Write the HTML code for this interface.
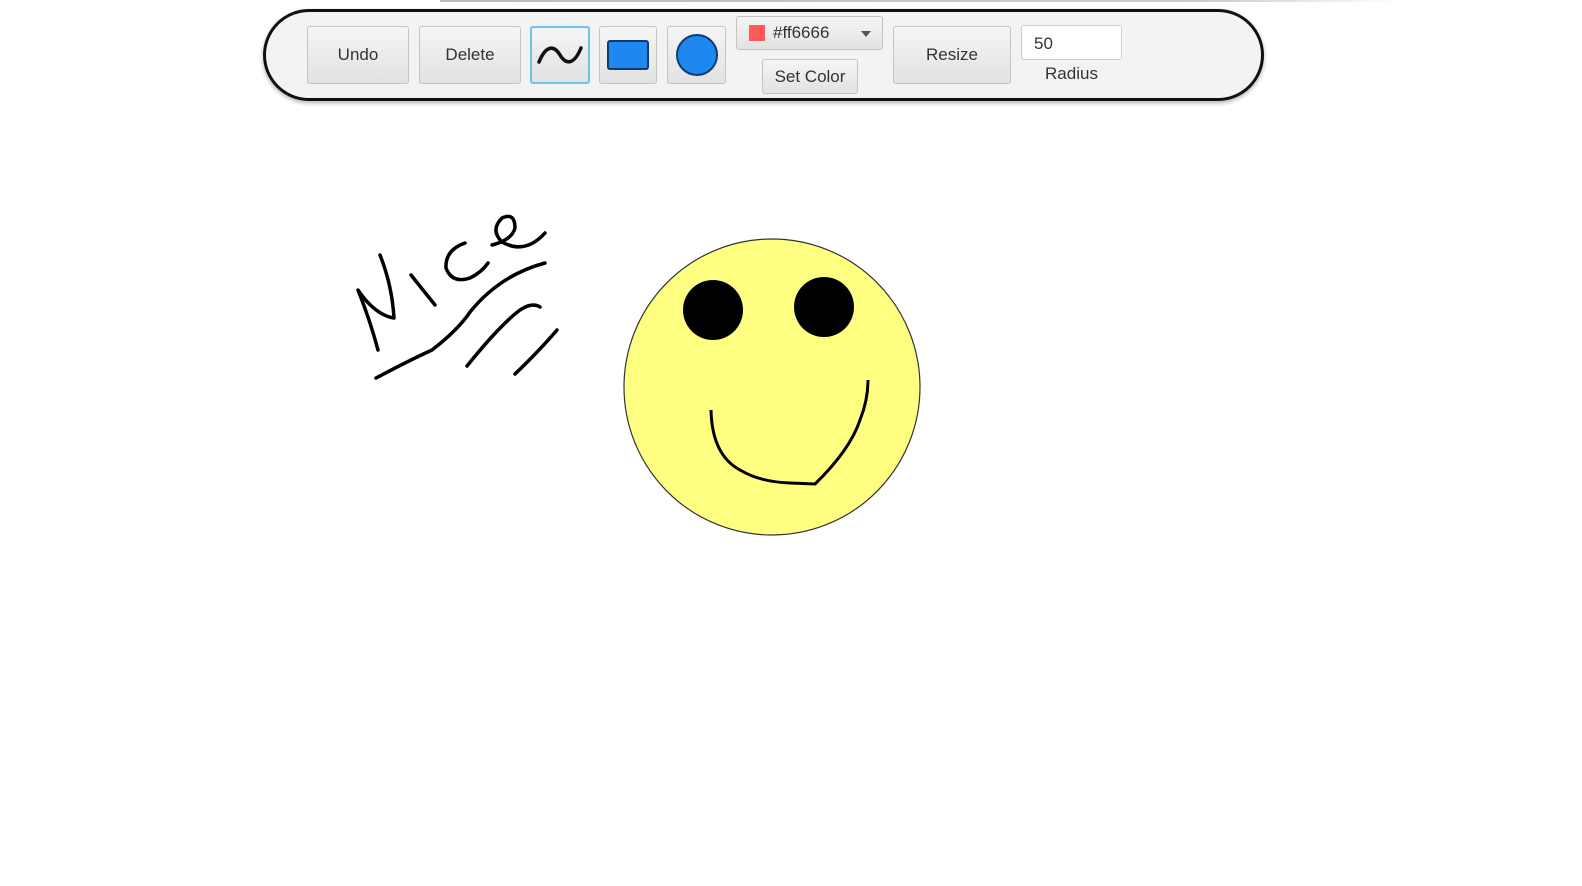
<!DOCTYPE html>
<html><head><meta charset="utf-8"><style>
body{margin:0;width:1582px;height:886px;background:#fff;position:relative;overflow:hidden;font-family:"Liberation Sans",sans-serif;}
.bar{position:absolute;left:263px;top:9px;width:995px;height:86px;border:3px solid #111;border-radius:46px;background:#f3f3f3;box-shadow:0 2px 4px rgba(0,0,0,.3);}
.b{position:absolute;box-sizing:border-box;border:1px solid #c4c4c4;border-radius:3px;background:linear-gradient(#f5f5f5,#e2e2e2);color:#333;font-size:17px;display:flex;align-items:center;justify-content:center;}
.topline{position:absolute;left:440px;top:0;width:960px;height:2px;background:linear-gradient(90deg,#bbb,#ccc 80%,#fff);}
</style></head><body>
<div class="topline"></div>
<div class="bar"></div>
<div class="b" style="left:307px;top:26px;width:102px;height:58px">Undo</div>
<div class="b" style="left:419px;top:26px;width:102px;height:58px">Delete</div>
<div class="b" style="left:530px;top:26px;width:60px;height:58px;border:2px solid #6ec3e6">
<svg width="48" height="30" viewBox="0 0 48 30"><path d="M3 22 C10 5 18 5 24 15 C30 25 38 25 45 8" fill="none" stroke="#111" stroke-width="3.5" stroke-linecap="round"/></svg></div>
<div class="b" style="left:599px;top:26px;width:58px;height:58px"><div style="width:38px;height:26px;background:#1e88f0;border:2px solid #0d3d6e;border-radius:3px"></div></div>
<div class="b" style="left:667px;top:26px;width:59px;height:58px"><div style="width:38px;height:38px;background:#1e88f0;border:2px solid #0d3d6e;border-radius:50%"></div></div>
<div class="b" style="left:736px;top:16px;width:147px;height:34px;justify-content:flex-start;padding-left:12px;font-size:17px"><span style="width:16px;height:16px;background:#ff5a5a;display:inline-block;margin-right:8px"></span>#ff6666<span style="position:absolute;right:11px;top:14px;border-left:5px solid transparent;border-right:5px solid transparent;border-top:6px solid #555"></span></div>
<div class="b" style="left:762px;top:59px;width:96px;height:35px">Set Color</div>
<div class="b" style="left:893px;top:26px;width:118px;height:58px">Resize</div>
<div style="position:absolute;left:1021px;top:25px;width:101px;height:35px;box-sizing:border-box;background:#fff;border:1px solid #ccc;border-radius:3px;font-size:17px;color:#333;padding:8px 0 0 12px">50</div>
<div style="position:absolute;left:1021px;top:64px;width:101px;text-align:center;font-size:17px;color:#333">Radius</div>
<svg style="position:absolute;left:0;top:0" width="1582" height="886">
<g fill="none" stroke="#000" stroke-width="3.5" stroke-linecap="round" stroke-linejoin="round">
<path d="M378 350 Q370 320 358 290 Q375 315 394 318 Q392 285 380 255"/>
<path d="M411 275 L435 305"/>
<path d="M465 243 Q445 250 446 268 Q452 284 470 278 Q482 272 488 263"/>
<path d="M492 245 Q512 240 515 228 Q515 212 502 218 Q490 230 502 242 Q525 255 545 233"/>
<path d="M376 378 Q410 360 432 350 Q458 330 470 312 Q500 275 545 263"/>
<path d="M467 366 Q500 325 520 310 Q532 302 540 307"/>
<path d="M515 374 Q540 350 557 330"/>
</g>
<circle cx="772" cy="387" r="148" fill="#fefe80" stroke="#333" stroke-width="1.2"/>
<circle cx="713" cy="310" r="30" fill="#000"/>
<circle cx="824" cy="307" r="30" fill="#000"/>
<path d="M711 410 Q712 455 740 470 Q760 482 790 483 L815 484 Q850 450 860 420 Q868 400 868 380" fill="none" stroke="#000" stroke-width="3"/>
</svg>
</body></html>
